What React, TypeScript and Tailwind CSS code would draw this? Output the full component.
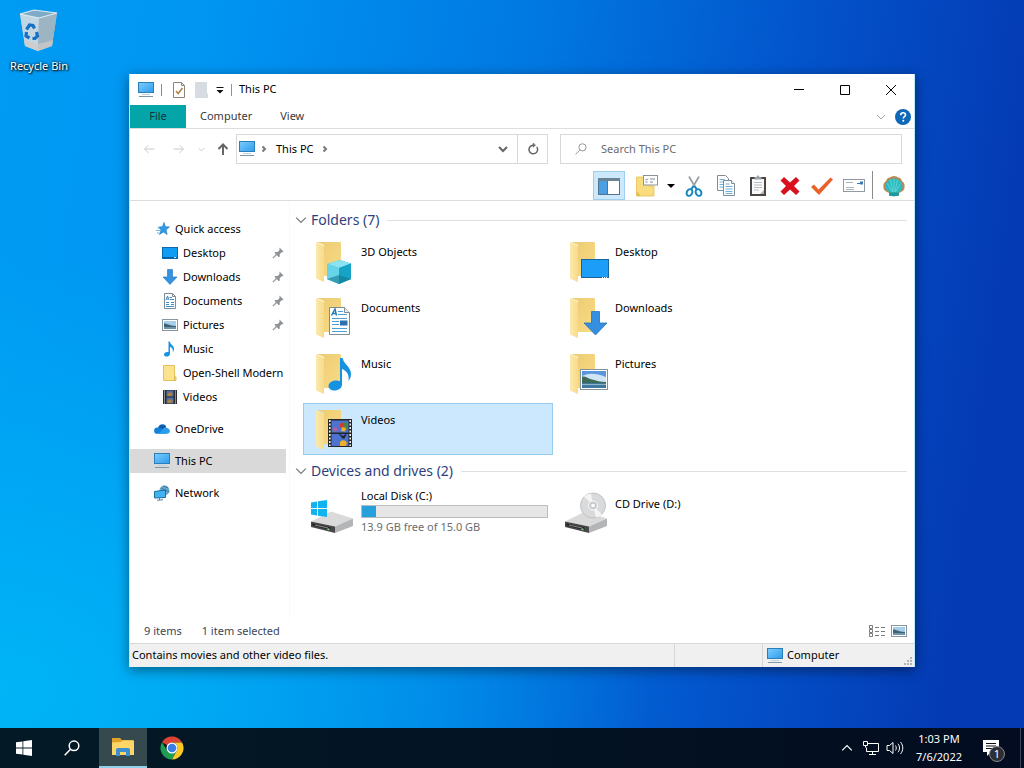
import { useState } from "react";
import type { ReactNode } from "react";

type IconProps = { className?: string };

/* ---------- small icons ---------- */

const PcIcon = ({ className = "size-4" }: IconProps) => (
  <svg viewBox="0 0 16 16" className={className}>
    <defs>
      <linearGradient id="pcScreen" x1="0" y1="0" x2="1" y2="1">
        <stop offset="0" stopColor="#7fcbfb" />
        <stop offset="1" stopColor="#2a9ef0" />
      </linearGradient>
    </defs>
    <rect x="0.5" y="0.5" width="15" height="10" fill="url(#pcScreen)" stroke="#2b7fb8" />
    <path d="M4 12.500h8" stroke="#bcd3df" />
    <path d="M1 14.500h14" stroke="#7e97a5" />
  </svg>
);

const Arrow = ({ dir, className }: { dir: "left" | "right" | "up"; className?: string }) => {
  const paths = {
    left: "M14 8H3M7.5 3.5L3 8l4.5 4.5",
    right: "M2 8h11M8.5 3.5L13 8l-4.5 4.5",
    up: "M8 14V3.5M3.5 8L8 3.5 12.500 8",
  };
  return (
    <svg viewBox="0 0 16 16" className={className} fill="none" stroke="currentColor">
      <path d={paths[dir]} />
    </svg>
  );
};

const Chevron = ({ dir, className }: { dir: "down" | "up" | "right"; className?: string }) => {
  const paths = { down: "M1 3l4 4 4-4", up: "M1 7l4-4 4 4", right: "M3.500 2.500l2.500 2.500-2.500 2.500" };
  return (
    <svg viewBox="0 0 10 10" className={className} fill="none" stroke="currentColor">
      <path d={paths[dir]} />
    </svg>
  );
};

const Caret = ({ className }: IconProps) => (
  <svg viewBox="0 0 8 8" className={className} fill="currentColor">
    <path d="M0 2h8L4 6z" />
  </svg>
);

const StarIcon = () => (
  <svg viewBox="0 0 16 16" className="size-4">
    <path d="M10 1.500l1.300 4.200 4.200.2-3.400 2.900 1 4.700L9.500 11l-4 2.500 1.500-4.600L4.500 6l3.900-.2z" fill="#2f9be6" stroke="#1676b8" strokeWidth=".6" />
    <path d="M2 9.500h4M3 12h2.500M3.500 7H6" stroke="#6db9ea" />
  </svg>
);

const DesktopIcon = () => (
  <svg viewBox="0 0 16 16" className="size-4">
    <rect x="0.500" y="2.500" width="15" height="11" fill="#109cf5" stroke="#0a6ab0" />
    <path d="M1 12.500h14" stroke="#0b5e9b" />
    <path d="M12 12.500h2" stroke="#bfe3fb" />
  </svg>
);

const DownIcon = () => (
  <svg viewBox="0 0 16 16" className="size-4">
    <path d="M5.500.500h5V8H15l-7 7.500L1 8h4.500z" fill="#3592e0" stroke="#1f72b8" strokeWidth=".6" />
  </svg>
);

const DocIcon = () => (
  <svg viewBox="0 0 16 16" className="size-4">
    <path d="M2.500.500h8l3 3v12h-11z" fill="#fff" stroke="#7d8b94" />
    <path d="M10.500.500v3h3" fill="none" stroke="#7d8b94" />
    <path d="M7.500 4.500H10M8 6.500h4M4 9.500h3M4 11.500h3M4 13.500h8M9 9.500h3M9 11.500h3" stroke="#3b8fc9" />
    <path d="M4 7l1.500-4L7 7M4.500 6h2" fill="none" stroke="#2674ad" strokeWidth=".8" />
  </svg>
);

const PhotoIcon = ({ className = "size-4" }: IconProps) => (
  <svg viewBox="0 0 16 16" className={className}>
    <rect x="0.500" y="2.500" width="15" height="11" fill="#fff" stroke="#8796a0" />
    <path d="M2 4h12v8H2z" fill="#a8cfea" />
    <path d="M2 6.500c3 0 5 2 12 2.500v1H2z" fill="#3f6172" />
    <path d="M2 10h12v2H2z" fill="#6d94ab" />
  </svg>
);

const NoteIcon = () => (
  <svg viewBox="0 0 16 16" className="size-4">
    <path d="M6.500.500h1.300c.4 3 4.200 3.800 4.200 7.300 0 1.400-.5 2.500-1.300 3.500.8-3-.8-4.800-2.700-5.500v6.600c0 1.900-1.500 3.200-3.400 3.200-1.600 0-2.600-.9-2.600-2.100 0-1.500 1.500-2.600 3.200-2.600.5 0 .9.100 1.300.2z" fill="#1793df" />
  </svg>
);

const FolderIcon = () => (
  <svg viewBox="0 0 16 16" className="size-4">
    <path d="M1.500.500h11v10l1.500 1v4H1.500z" fill="#fbe28c" stroke="#e3c05c" />
    <path d="M12.500 11.500v4" stroke="#d9b24a" />
  </svg>
);

const FilmIcon = () => (
  <svg viewBox="0 0 16 16" className="size-4">
    <path d="M1 1h14v14H1z" fill="#2c2c33" />
    <path d="M4.500 1.500h7v6h-7zM4.500 8.500h7v6h-7z" fill="#4f6ea6" />
    <path d="M5 5l3-2 3 2-2 2H6zM5 12l3-2 3 2-2 2H6z" fill="#a8823f" />
    <path d="M2.500 1.500v13M13.500 1.500v13" stroke="#eee" strokeDasharray="1 1" />
  </svg>
);

const CloudIcon = () => (
  <svg viewBox="0 0 16 16" className="size-4">
    <path d="M4 6.500C5 4 6.500 3.200 8.500 3.200c2 0 3.400 1.300 3.800 3L8 9z" fill="#0a5fae" />
    <path d="M3 12.800a3.100 3.100 0 0 1 .5-6.200c2.500-.3 4 1 6 2.500l3 3.700z" fill="#1480d8" />
    <path d="M4.500 12.800L10 7.600c2-1.800 5.600-.5 5.900 2.500 0 1.600-1.200 2.700-2.800 2.700z" fill="#27a0ee" />
  </svg>
);

const NetworkIcon = () => (
  <svg viewBox="0 0 16 16" className="size-4">
    <circle cx="10.500" cy="5.500" r="5" fill="#6da9cc" />
    <path d="M7 3c2 0 2 2 4 2s2 2 4 1.500M9 1c2 1 4 1 5 2" fill="none" stroke="#2f749c" />
    <path d="M.500 6.500l11-1.500v7.500L.500 13z" fill="#42b2f2" stroke="#176f9f" />
    <path d="M3 15.300l6-.5M5.500 13V15" stroke="#55849c" />
  </svg>
);

const PinIcon = () => (
  <svg viewBox="0 0 12 12" className="size-3 shrink-0">
    <path d="M7.500.500l4 4-1 .8-.8-.1-2 2 .1 2.200-.9.900L2.500 5.900l.9-.9 2.200.1 2-2-.2-.9z" fill="#909498" />
    <path d="M4.500 7.500L.8 11.200" stroke="#909498" strokeWidth="1.200" />
  </svg>
);

/* ---------- toolbar icons ---------- */

const PaneIcon = () => (
  <svg viewBox="0 0 24 20" className="h-5 w-6">
    <rect x="1.500" y="2.500" width="21" height="16" fill="#fff" stroke="#56718a" />
    <path d="M1 2h22v3H1z" fill="#6b8397" />
    <path d="M2 5h8v13H2z" fill="#4aa0e3" />
    <path d="M10.500 5v13" stroke="#56718a" />
  </svg>
);

const FolderOptionsIcon = () => (
  <svg viewBox="0 0 22 24" className="h-6 w-[22px]">
    <path d="M.5 3h13v9h4.500v10H.5z" fill="#f9dc7e" stroke="#e6bf55" strokeWidth=".8" />
    <path d="M1 17l3 4v1H1z" fill="#e9bd4a" />
    <rect x="7.500" y="1.500" width="14" height="9.500" fill="#fff" stroke="#8a939a" />
    <path d="M9.500 5l1 1.200L12 4.500M14 5h5M9.500 8h2M14 8h3" fill="none" stroke="#7b8790" />
  </svg>
);

const CutIcon = () => (
  <svg viewBox="0 0 18 24" className="h-6 w-[18px]" fill="none">
    <path d="M4 2.500L11 14.500M14 2.500L7 14.500" stroke="#9aa2a8" strokeWidth="1.800" />
    <path d="M8.500 12L6 15.500M9.500 12l2.500 3.500" stroke="#1788c0" strokeWidth="2" />
    <ellipse cx="4.500" cy="18.500" rx="2.700" ry="3.500" stroke="#1788c0" strokeWidth="2" transform="rotate(28 4.500 18.500)" />
    <ellipse cx="13.500" cy="18.500" rx="2.700" ry="3.500" stroke="#1788c0" strokeWidth="2" transform="rotate(-28 13.500 18.500)" />
  </svg>
);

const CopyIcon = () => (
  <svg viewBox="0 0 20 24" className="h-6 w-5" fill="#fff">
    <path d="M1.500 1.500h8l3 3v12h-11z" stroke="#7f8d97" />
    <path d="M3.500 5.500h5M3.500 8h6M3.500 10.500h6M3.500 13h5" stroke="#6faedb" />
    <path d="M7.500 6.500h8l3 3v12h-11z" stroke="#7f8d97" />
    <path d="M15.500 6.500v3h3" stroke="#7f8d97" />
    <path d="M9.500 10h4M9.500 12.500h7M9.500 15h7M9.500 17.500h7M9.500 19.500h7" stroke="#6faedb" />
  </svg>
);

const PasteIcon = () => (
  <svg viewBox="0 0 18 24" className="h-6 w-[18px]">
    <rect x="1" y="3" width="16" height="19" fill="#4b4642" />
    <rect x="3" y="5" width="12" height="15" fill="#fafafa" />
    <path d="M5.500 5.500V3h2L9 1l1.500 2h2v2.500z" fill="#9aa1a6" />
    <path d="M5 8.500h8M5 11h8M5 13.500h8M5 16h5" stroke="#b9c0c5" />
    <path d="M11 20l4-4v4z" fill="#aeb5ba" />
  </svg>
);

const DeleteIcon = () => (
  <svg viewBox="0 0 20 20" className="size-5">
    <path d="M.500 4.500L4 1l6 5.500L16 1l3.500 3.500L14 10l5.500 5.500L16 19l-6-5.500L4 19 .500 15.500 6 10z" fill="#d9101e" />
  </svg>
);

const CheckIcon = () => (
  <svg viewBox="0 0 24 20" className="h-5 w-6">
    <path d="M1 11l3-2.500 4.500 5L20.500 1.500l2.500 2L9 19z" fill="#e8622a" />
  </svg>
);

const RenameIcon = () => (
  <svg viewBox="0 0 24 16" className="h-4 w-6">
    <rect x="1.500" y="1.500" width="21" height="12" fill="#fff" stroke="#8f9aa3" />
    <path d="M4 4.500h7M4 9.500h8M4 11.500h8" stroke="#aab4bb" />
    <path d="M18 3.500h3v3h-3z" fill="#3b78b8" />
    <path d="M15 5.500h3" stroke="#3b78b8" />
  </svg>
);

const ShellIcon = () => (
  <svg viewBox="0 0 24 22" className="h-[22px] w-6">
    <path d="M12 1c2 0 3 .8 4 1.500 2 .2 3.500 1.500 4 3.500 2 1.500 3 3.500 2.500 5.500.5 2.500-1 4.500-3.500 5.500l-2 1v2.500c-3 1-7 1-10 0V18l-2-1C2.500 16 1 14 1.500 11.500 1 9.500 2 7.500 4 6c.5-2 2-3.300 4-3.500C9 1.800 10 1 12 1z" fill="#b98a55" />
    <path d="M12 3.500c5 0 8.500 3.700 8.500 8.200 0 3.800-3.500 6-8.500 6.300-5-.3-8.500-2.500-8.500-6.300C3.500 7.200 7 3.500 12 3.500z" fill="#2cbcc0" />
    <path d="M12 4v13M8.500 5l2.500 12M15.500 5L13 17M5.500 8.500l5 8.500M18.500 8.500l-5 8.500" stroke="#6fdcdc" strokeWidth=".7" fill="none" />
    <path d="M7 17.500h10v3c-3 1-7 1-10 0z" fill="#199b9f" />
  </svg>
);

const HelpIcon = () => (
  <svg viewBox="0 0 16 16" className="size-4">
    <circle cx="8" cy="8" r="8" fill="#0f67b8" />
    <path d="M5.700 6.200c0-1.500 1-2.400 2.400-2.400s2.400.8 2.400 2.100c0 1.700-2.200 1.700-2.200 3.500" fill="none" stroke="#fff" strokeWidth="1.600" />
    <circle cx="8.300" cy="11.800" r="1" fill="#fff" />
  </svg>
);

/* ---------- tile icons ---------- */

const FolderTile = ({ children }: { children: ReactNode }) => (
  <svg viewBox="0 0 48 48" className="size-12 shrink-0 self-center">
    <defs>
      <linearGradient id="folderLeaf" x1="0" y1="0" x2="1" y2="0">
        <stop offset="0" stopColor="#fbe9ae" />
        <stop offset="1" stopColor="#f8da8a" />
      </linearGradient>
      <linearGradient id="folderBack" x1="0" y1="0" x2="1" y2="1">
        <stop offset="0" stopColor="#eccb70" />
        <stop offset="1" stopColor="#f9dc88" />
      </linearGradient>
    </defs>
    <path d="M9 5h23l1 1v33H16V8z" fill="url(#folderBack)" />
    <path d="M8 5l7 3.500c.8.400 1 1 1 2V45l-7-3c-.7-.4-1-1-1-1.600z" fill="url(#folderLeaf)" />
    {children}
  </svg>
);

const CubeTile = () => (
  <FolderTile>
    <path d="M19 27l13-4 11 3.500V42l-12 5-12-5z" fill="#35b3cf" />
    <path d="M19 27l13-4 11 3.500L31 31z" fill="#8be2f1" />
    <path d="M19 27l12 4v16l-12-5z" fill="#66d4e8" />
    <path d="M31 31l12-4.500V42l-12 5z" fill="#17a3c6" />
    <path d="M19 42l12-4 12 4-12 5z" fill="#12768f" opacity=".6" />
  </FolderTile>
);

const DesktopTile = () => (
  <FolderTile>
    <rect x="19.500" y="22.500" width="27" height="18" fill="#1b9df8" stroke="#1565a0" />
    <path d="M20 40.500h26" stroke="#1d5f92" />
    <path d="M40 40.500h5" stroke="#fff" strokeDasharray="1 1" />
  </FolderTile>
);

const DocTile = () => (
  <FolderTile>
    <path d="M21.500 14.500h15l5 5v22h-20z" fill="#fff" stroke="#808b93" />
    <path d="M36.500 14.500v5h5" fill="#e9edf0" stroke="#808b93" />
    <path d="M23.500 22.500L27 16l1.500 6.500M25 20.500h3" fill="none" stroke="#2478b5" strokeWidth="1.400" />
    <path d="M30 18.500h5M30 21.500h9M24 25.500h15M24 28.500h7M24 31.500h7M24 35.500h15M24 38.500h15" stroke="#4a9fd4" />
    <path d="M32 27.500h7.500v5H32z" fill="#2e6fae" />
  </FolderTile>
);

const DownloadTile = () => (
  <FolderTile>
    <path d="M29.500 18.500h8V30h7.500L33.500 42 22 30h7.500z" fill="#358fe0" stroke="#2373b8" strokeWidth=".8" />
  </FolderTile>
);

const MusicTile = () => (
  <FolderTile>
    <path d="M32 9h2.500c1 6 8.500 8.500 8.500 16 0 3-1 5-2.500 7 1-6-1.500-10-6.500-12v15.500c0 3.500-3.500 6-7.500 6-3.500 0-6-1.800-6-4.500 0-3 3.300-5.500 7.500-5.500 1.500 0 3 .3 4 .8z" fill="#1593e2" />
  </FolderTile>
);

const PictureTile = () => (
  <FolderTile>
    <rect x="18.500" y="20.500" width="27" height="20" fill="#fff" stroke="#87919a" />
    <path d="M20 22h24v17H20z" fill="#5b95dc" />
    <path d="M20 27c5-2.500 12-4 24 1v6H20z" fill="#cfe4f5" />
    <path d="M20 27.500c4-.5 6 2 10 3s8 2.500 14 2.500v1.500H20z" fill="#3c6a55" />
    <path d="M20 34h24v5H20z" fill="#40799f" />
    <path d="M20 35.500h24" stroke="#8db5cb" />
  </FolderTile>
);

const VideoTile = () => (
  <FolderTile>
    <path d="M20 14h24v28H20z" fill="#25262b" />
    <path d="M23.500 15.500h17v12h-17zM23.500 29h17v12h-17z" fill="#4d72cf" />
    <path d="M24 26c2-4 5-3 6 0zM36 17l3 1 1 5-3 3-2-3z" fill="#3f8b4b" />
    <path d="M33 17l3 2 .500 4-3 1-2-3z" fill="#d83a2e" />
    <path d="M25 22l4 1 1 3-5 .500z" fill="#b55a9d" />
    <path d="M34 22l4 1-1 3.500-4-.500zM32 37c2-3 6-2 7 1l-1 3h-6z" fill="#eeb12c" />
    <path d="M30 28l5 3 4-3-2.500 5.500h-2z" fill="#20242f" />
    <path d="M21.800 15v26M42.200 15v26" stroke="#f3f0dc" strokeWidth="1.600" strokeDasharray="2 1.500" />
  </FolderTile>
);

const DriveBody = () => (
  <>
    <path d="M3 33.500l20-10 22 7-18 8z" fill="#dadada" />
    <path d="M3 33.500l24 5V45L3 39z" fill="#47484a" />
    <path d="M27 38.500l18-8v7.500l-18 7z" fill="#b4b5b6" />
    <path d="M4.500 35.500l18 4v2.500l-18-4.500z" fill="#1f2021" />
    <path d="M7 37l13 3" stroke="#8c8d8f" />
    <path d="M19.500 41l2 .5" stroke="#7fe08a" strokeWidth="1.300" />
  </>
);

const LocalDiskTile = () => (
  <svg viewBox="0 0 48 48" className="size-12 shrink-0">
    <DriveBody />
    <path d="M3 14.500l6-1V20H3zM10 13.300l9-1.300v8h-9zM3 21h6v6.500l-6-1zM10 21h9v8l-9-1.300z" fill="#12b4f0" />
  </svg>
);

const CdTile = () => (
  <svg viewBox="0 0 48 48" className="size-12 shrink-0">
    <DriveBody />
    <circle cx="31" cy="17.500" r="12.500" fill="#d8dadb" stroke="#bfc2c4" />
    <path d="M31 17.500L22 8.500a12 12 0 0 1 7-3zM31 17.500l9 9a12 12 0 0 1-6 3z" fill="#f4f4f4" />
    <circle cx="31" cy="17.500" r="4.500" fill="#c9ccce" stroke="#fff" />
    <circle cx="31" cy="17.500" r="1.800" fill="#fff" />
  </svg>
);

/* ---------- desktop and taskbar icons ---------- */

const RecycleBinIcon = () => (
  <svg viewBox="0 0 48 48" className="size-12">
    <path d="M5 6l14-4 23 3-5 33-14 5-13-5z" fill="#a9c2d2" opacity=".95" />
    <path d="M5 6l19 4-1 33-13-5z" fill="#c3d6e3" />
    <path d="M24 10l18-5-5 33-14 5z" fill="#9db4c3" />
    <path d="M5 6l14-4 23 3-18 5z" fill="#7fabc6" stroke="#dcebf3" strokeWidth="1.200" />
    <path d="M9 32l14 4 15-4-1 6-14 5-13-5z" fill="#d2cbc6" opacity=".7" />
    <g fill="none" stroke="#1670c4" strokeWidth="3.200">
      <path d="M11.500 21.500l3-4.500 3.500.5 1.500 3" />
      <path d="M21.500 24l1 4-2.500 2.500h-2.500" />
      <path d="M14.500 30l-3.500-2 .5-4" />
    </g>
  </svg>
);

const WindowsIcon = () => (
  <svg viewBox="0 0 16 16" className="size-4" fill="#fff">
    <path d="M0 2.300L6.500 1.400v6.200H0zM7.300 1.200L16 0v7.600H7.300zM0 8.400h6.500v6.200L0 13.700zM7.300 8.400H16V16l-8.700-1.200z" />
  </svg>
);

const SearchIcon = ({ className }: IconProps) => (
  <svg viewBox="0 0 16 16" className={className} fill="none" stroke="currentColor">
    <circle cx="10" cy="5.800" r="4.800" />
    <path d="M6.500 9.300L.7 15.200" />
  </svg>
);

const ExplorerIcon = () => (
  <svg viewBox="0 0 24 20" className="h-5 w-6">
    <path d="M1 1h8l2 2h11v5H1z" fill="#dfa32d" />
    <path d="M1 5.500l9-.5 2-1.500h11V18H1z" fill="#fcd667" />
    <path d="M5 19v-7l1.500-1h11l1.500 1v7h-4v-4H9v4z" fill="#3e8fd0" />
  </svg>
);

const ChromeIcon = () => (
  <svg viewBox="0 0 24 24" className="size-6">
    <path d="M12 12L2.040 6.250A11.500 11.500 0 0 1 21.960 6.250L22 6.500H12z" fill="#dd4334" />
    <path d="M2.040 6.250A11.500 11.500 0 0 0 12 23.500l4.760-8.750L12 12l-4.760 2.750z" fill="#1e9e52" />
    <path d="M21.960 6.250A11.500 11.500 0 0 1 12 23.500l4.760-8.750A5.500 5.500 0 0 0 12 6.500h9.960z" fill="#fbc926" />
    <circle cx="12" cy="12" r="5.500" fill="#fff" />
    <circle cx="12" cy="12" r="4.300" fill="#3a7de8" />
  </svg>
);

const LanIcon = () => (
  <svg viewBox="0 0 18 16" className="h-4 w-[18px]" fill="none" stroke="#fff">
    <path d="M5.500 3.500h11v8h-12v-4M10.500 11.500v3M7 14.500h7" />
    <path d="M1.500 1.500h4v4h-4zM3.500 5.500v2" />
  </svg>
);

const VolumeIcon = () => (
  <svg viewBox="0 0 18 16" className="h-4 w-[18px]" fill="none" stroke="#fff">
    <path d="M1 5.500h2.500L7 2.500v11l-3.500-3H1z" />
    <path d="M9.500 5.500c1 1.500 1 3.500 0 5M12 3.800c2 2.500 2 6 0 8.400M14.500 2c3 3.500 3 8.500 0 12" />
  </svg>
);

const ActionIcon = () => (
  <svg viewBox="0 0 18 18" className="size-[18px]">
    <path d="M1 1h16v12H9l-4 4v-4H1z" fill="#fff" />
    <path d="M4 4.500h10M4 7h10M4 9.500h7" stroke="#06101f" />
  </svg>
);

/* ---------- data ---------- */

type NavEntry = { label: string; icon: ReactNode; child?: boolean; pinned?: boolean; gap?: boolean };

const navEntries: NavEntry[] = [
  { label: "Quick access", icon: <StarIcon /> },
  { label: "Desktop", icon: <DesktopIcon />, child: true, pinned: true },
  { label: "Downloads", icon: <DownIcon />, child: true, pinned: true },
  { label: "Documents", icon: <DocIcon />, child: true, pinned: true },
  { label: "Pictures", icon: <PhotoIcon />, child: true, pinned: true },
  { label: "Music", icon: <NoteIcon />, child: true },
  { label: "Open-Shell Modern", icon: <FolderIcon />, child: true },
  { label: "Videos", icon: <FilmIcon />, child: true },
  { label: "OneDrive", icon: <CloudIcon />, gap: true },
  { label: "This PC", icon: <PcIcon />, gap: true },
  { label: "Network", icon: <NetworkIcon />, gap: true },
];

const folders = [
  { name: "3D Objects", icon: <CubeTile /> },
  { name: "Desktop", icon: <DesktopTile /> },
  { name: "Documents", icon: <DocTile /> },
  { name: "Downloads", icon: <DownloadTile /> },
  { name: "Music", icon: <MusicTile /> },
  { name: "Pictures", icon: <PictureTile /> },
  { name: "Videos", icon: <VideoTile /> },
];

const tools = [
  { name: "Cut", icon: <CutIcon /> },
  { name: "Copy", icon: <CopyIcon /> },
  { name: "Paste", icon: <PasteIcon /> },
  { name: "Delete", icon: <DeleteIcon /> },
  { name: "Properties", icon: <CheckIcon /> },
  { name: "Rename", icon: <RenameIcon /> },
];

const tileBase = "flex h-[52px] w-[250px] gap-[5px] border px-1 text-left";

/* ---------- window parts ---------- */

const TitleBar = () => (
  <header className="flex h-[31px] items-center pl-2">
    <PcIcon />
    <span className="ml-[7px] h-3 w-px bg-[#8a8a8a]" />
    <button aria-label="Properties" className="ml-[9px]">
      <svg viewBox="0 0 16 16" className="size-4">
        <path d="M2.500.500h8l3 3v12h-11z" fill="#fff" stroke="#8f8277" />
        <path d="M10.500.500v3h3" fill="none" stroke="#8f8277" />
        <path d="M5 9l2.200 2.500L11.500 6" fill="none" stroke="#b08347" strokeWidth="1.600" />
      </svg>
    </button>
    <button aria-label="New folder" className="ml-[7px]">
      <svg viewBox="0 0 16 16" className="size-4">
        <path d="M1 0h12v11l1 1v4H1z" fill="#d6dce1" />
      </svg>
    </button>
    <button aria-label="Customize" className="ml-[6px]">
      <svg viewBox="0 0 8 8" className="size-2">
        <path d="M.500 1.500h7" stroke="#111" />
        <path d="M.500 4h7L4 7.500z" fill="#111" />
      </svg>
    </button>
    <span className="ml-[7px] h-3 w-px bg-[#a58d7e]" />
    <h1 className="ml-[7px]">This PC</h1>
    <div className="ml-auto flex h-full">
      <button aria-label="Minimize" className="flex w-[46px] items-center justify-center">
        <svg viewBox="0 0 10 10" className="size-[10px]" stroke="#000"><path d="M0 4.500h10" /></svg>
      </button>
      <button aria-label="Maximize" className="flex w-[46px] items-center justify-center">
        <svg viewBox="0 0 10 10" className="size-[10px]" fill="none" stroke="#000"><path d="M.500.500h9v9h-9z" /></svg>
      </button>
      <button aria-label="Close" className="flex w-[46px] items-center justify-center">
        <svg viewBox="0 0 10 10" className="size-[10px]" stroke="#000"><path d="M0 0l10 10M10 0L0 10" /></svg>
      </button>
    </div>
  </header>
);

const RibbonTabs = () => (
  <div className="flex h-6 items-stretch border-b border-[#dcdddf] text-[#3a3a3a]">
    <button className="w-14 bg-[#04a5a8] text-[#12363a]">File</button>
    <button className="px-[14px]">Computer</button>
    <button className="px-[14px]">View</button>
    <button aria-label="Expand the ribbon" className="mr-[9px] ml-auto text-[#a5a5a5]">
      <Chevron dir="down" className="size-[10px]" />
    </button>
    <button aria-label="Help" className="mr-[3px]">
      <HelpIcon />
    </button>
  </div>
);

const AddressRow = () => (
  <div className="flex h-[30px] items-center pr-3">
    <button aria-label="Back" className="ml-3 text-[#c2c2c2]"><Arrow dir="left" className="size-[14px]" /></button>
    <button aria-label="Forward" className="ml-4 text-[#c2c2c2]"><Arrow dir="right" className="size-[14px]" /></button>
    <button aria-label="Recent locations" className="ml-3 text-[#b8b8b8]"><Chevron dir="down" className="size-[7px]" /></button>
    <button aria-label="Up" className="ml-[10px] text-[#666]"><Arrow dir="up" className="size-4 stroke-2" /></button>
    <div className="ml-[5px] flex h-full flex-[310_1_0%] items-center border border-[#d9d9d9]">
      <span className="ml-[2px]"><PcIcon /></span>
      <Chevron dir="right" className="ml-1 size-[10px] stroke-2 text-[#777]" />
      <button className="ml-[7px]">This PC</button>
      <Chevron dir="right" className="ml-[6px] size-[10px] stroke-2 text-[#777]" />
      <button aria-label="Previous locations" className="mr-[9px] ml-auto text-[#666]">
        <Chevron dir="down" className="size-[10px] stroke-2" />
      </button>
      <button aria-label="Refresh" className="flex h-full w-[30px] items-center justify-center border-l border-[#d9d9d9]">
        <svg viewBox="0 0 12 12" className="size-3" fill="none" stroke="#666" strokeWidth="1.500">
          <path d="M9.800 4A4.300 4.300 0 1 1 6 2.200h2.500" />
          <path d="M6.500.200v4" />
        </svg>
      </button>
    </div>
    <label className="ml-3 flex h-full flex-[326_1_0%] items-center border border-[#d9d9d9] pl-[14px]">
      <SearchIcon className="size-3 text-[#777]" />
      <input
        type="text"
        aria-label="Search This PC"
        placeholder="Search This PC"
        className="ml-[14px] min-w-0 flex-1 outline-none placeholder:text-[#6b6b6b]"
      />
    </label>
  </div>
);

const Toolbar = () => (
  <div className="mt-[7px] flex h-[30px] items-stretch justify-end border-b border-[#dcdddf] pr-[6px]">
    <button aria-label="Navigation pane" className="flex w-8 items-center justify-center border border-[#9fcfef] bg-[#cce8fb]">
      <PaneIcon />
    </button>
    <button aria-label="Options" className="flex w-[53px] items-center gap-[9px] pl-[11px] text-black">
      <FolderOptionsIcon />
      <Caret className="size-2" />
    </button>
    {tools.map((tool) => (
      <button key={tool.name} aria-label={tool.name} className="flex w-8 items-center justify-center">
        {tool.icon}
      </button>
    ))}
    <span className="mr-[7px] ml-[2px] h-7 w-px bg-[#8c8c8c]" />
    <button aria-label="Shell settings" className="flex w-7 items-center justify-center">
      <ShellIcon />
    </button>
  </div>
);

const Sidebar = () => (
  <nav className="w-40 shrink-0 border-r border-[#f9f9f9] pt-4">
    {navEntries.map((entry) => (
      <button
        key={entry.label}
        className={`flex h-6 w-[156px] items-center gap-[5px] whitespace-nowrap ${entry.child ? "pl-8" : "pl-6"} ${
          entry.gap ? "mt-2" : ""
        } ${entry.label === "This PC" ? "bg-[#d9d9d9]" : ""}`}
      >
        <span className="shrink-0">{entry.icon}</span>
        <span>{entry.label}</span>
        {entry.pinned && <span className="mr-[2px] ml-auto"><PinIcon /></span>}
      </button>
    ))}
  </nav>
);

const GroupHeader = ({ title }: { title: string }) => (
  <h2 className="flex h-6 items-center text-sm text-[#2f3f7d]">
    <Chevron dir="down" className="ml-px size-3 text-[#777]" />
    <span className="ml-1">{title}</span>
    <span className="ml-2 h-px flex-1 bg-[#dedfe3]" />
  </h2>
);

const App = () => {
  const [selected, setSelected] = useState("Videos");

  return (
    <div className="flex h-screen flex-col overflow-hidden bg-[radial-gradient(ellipse_at_0%_90%,#00b4f6_0%,transparent_45%),linear-gradient(98deg,#009bf3_0%,#0096f2_18%,#0078e2_48%,#0353cb_72%,#043bb4_92%)] font-['Noto_Sans','Open_Sans',sans-serif] text-[11px] text-black">
      <main className="relative flex-1">
        <button className="mt-2 flex w-[78px] flex-col items-center">
          <RecycleBinIcon />
          <span className="mt-[2px] leading-4 text-white [text-shadow:1px_1px_2px_#000,0_0_3px_#000]">Recycle Bin</span>
        </button>

        <section className="absolute top-[74px] right-[109px] bottom-[61px] left-[129px] flex flex-col border-x border-[#b8ecfb] bg-white shadow-[0_3px_12px_rgba(0,0,0,0.45)]">
          <TitleBar />
          <RibbonTabs />
          <div className="pt-[5px]">
            <AddressRow />
            <Toolbar />
          </div>

          <div className="flex min-h-0 flex-1">
            <Sidebar />
            <div className="min-w-0 flex-1 overflow-hidden pt-[7px] pr-[7px] pl-1">
              <GroupHeader title="Folders (7)" />
              <div className="mt-[3px] flex flex-wrap gap-1 pl-[9px]">
                {folders.map((folder) => (
                  <button
                    key={folder.name}
                    onClick={() => setSelected(folder.name)}
                    className={`${tileBase} ${
                      folder.name === selected ? "border-[#99cbee] bg-[#cce8ff]" : "border-transparent"
                    }`}
                  >
                    {folder.icon}
                    <span className="pt-2 leading-4">{folder.name}</span>
                  </button>
                ))}
              </div>

              <div className="mt-1">
                <GroupHeader title="Devices and drives (2)" />
              </div>
              <div className="mt-1 flex flex-wrap gap-1 pl-[9px]">
                <button className={`${tileBase} border-transparent`}>
                  <LocalDiskTile />
                  <span className="flex flex-1 flex-col">
                    <span className="leading-4">Local Disk (C:)</span>
                    <span className="mt-px flex h-[13px] border border-[#bcbcbc] bg-[#e6e6e6]">
                      <span className="bg-[#26a0da]" style={{ width: `${(1.1 / 15) * 100}%` }} />
                    </span>
                    <span className="mt-px leading-4 text-[#6d6d6d]">13.9 GB free of 15.0 GB</span>
                  </span>
                </button>
                <button className={`${tileBase} border-transparent`}>
                  <CdTile />
                  <span className="pt-2 leading-4">CD Drive (D:)</span>
                </button>
              </div>
            </div>
          </div>

          <div className="flex h-6 items-center pr-[7px] pl-[14px] text-[#3c4654]">
            <span>9 items</span>
            <span className="ml-5">1 item selected</span>
            <button aria-label="Details view" className="ml-auto">
              <svg viewBox="0 0 16 14" className="h-[14px] w-4" fill="none" stroke="#7b7b7b">
                <path d="M.500 1.500h3v3h-3zM.500 5.500h3v3h-3zM.500 9.500h3v3h-3z" />
                <path d="M6 3.500h10M6 7.500h10M6 11.500h10" strokeDasharray="4 2" />
              </svg>
            </button>
            <button aria-label="Large icons view" className="ml-[6px]">
              <PhotoIcon />
            </button>
          </div>

          <footer className="flex h-6 items-center border-t border-[#d7d7d7] bg-[#f0f0f0] pl-[2px]">
            <span>Contains movies and other video files.</span>
            <span className="ml-auto h-full w-[88px] border-l border-[#d7d7d7]" />
            <span className="flex h-full w-[152px] items-center gap-1 border-l border-[#d7d7d7] pl-1">
              <PcIcon />
              Computer
              <svg viewBox="0 0 10 10" className="mr-px ml-auto size-[10px] self-end" fill="#b5b5b5">
                <path d="M7 0h2v2H7zM4 3h2v2H4zM7 3h2v2H7zM1 6h2v2H1zM4 6h2v2H4zM7 6h2v2H7z" />
              </svg>
            </span>
          </footer>
        </section>
      </main>

      <footer className="flex h-10 items-stretch bg-linear-to-r from-[#031a26] to-[#030c20] text-white">
        <button aria-label="Start" className="flex w-12 items-center justify-center"><WindowsIcon /></button>
        <button aria-label="Search" className="flex w-12 items-center justify-center"><SearchIcon className="size-4 stroke-[1.500]" /></button>
        <button aria-label="File Explorer" className="ml-[3px] flex w-12 items-center justify-center border-b-2 border-[#8fd0ea] bg-[#36494f]">
          <ExplorerIcon />
        </button>
        <button aria-label="Chrome" className="ml-px flex w-12 items-center justify-center"><ChromeIcon /></button>
        <div className="ml-auto flex items-center">
          <button aria-label="Show hidden icons"><Chevron dir="up" className="size-3" /></button>
          <button aria-label="Network" className="ml-[9px]"><LanIcon /></button>
          <button aria-label="Volume" className="ml-[6px]"><VolumeIcon /></button>
          <button className="ml-2 w-[54px] text-center leading-[18px]">
            <span className="block">1:03 PM</span>
            <span className="block">7/6/2022</span>
          </button>
          <button aria-label="Notifications" className="relative mr-5 ml-4">
            <ActionIcon />
            <span className="absolute top-[7px] left-[7px] flex size-4 items-center justify-center rounded-full border border-[#888] bg-[#2c2f36]">1</span>
          </button>
          <span className="mr-[3px] h-10 w-px bg-[#3b4553]" />
        </div>
      </footer>
    </div>
  );
};

export default App;
